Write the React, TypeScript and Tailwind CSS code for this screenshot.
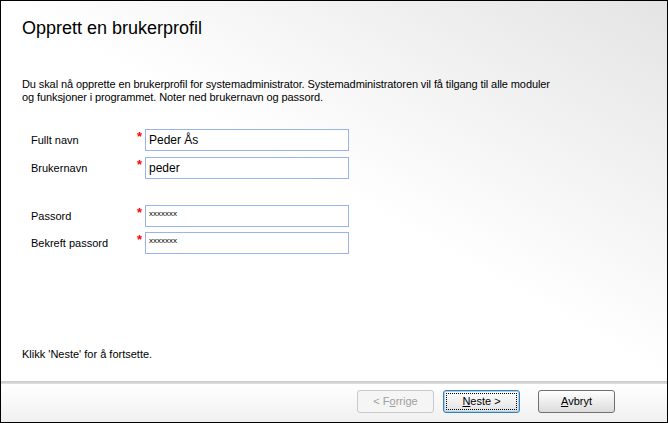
import React from 'react'

const font = { fontFamily: '"Liberation Sans", Arial, sans-serif' }

function Field({ label, value, secret }: { label: string; value: string; secret?: boolean }) {
  return (
    <div className="flex items-start h-[22px]">
      <div className="w-[106px] pt-[5px] text-[11px] leading-[13px] text-black">{label}</div>
      <div className="w-[8px] h-[22px] text-[#ff0000] text-[13px] leading-[13px] font-bold pt-[1px]">*</div>
      <div className="w-[204px] h-[22px] border border-[#98b3ef] bg-white flex items-center px-[3px]">
        {secret ? (
          <span className="text-[8px] leading-[8px] text-black -mt-[4px]">{value}</span>
        ) : (
          <span className="text-[12px] leading-[14px] text-black">{value}</span>
        )}
      </div>
    </div>
  )
}

function XpButton({ children, disabled, focused }: { children: React.ReactNode; disabled?: boolean; focused?: boolean }) {
  return (
    <div
      className={
        'w-[77px] h-[23px] rounded-[3px] border flex items-center justify-center text-[11px] leading-[13px] ' +
        (disabled
          ? 'border-[#c9c9c9] bg-[#f5f5f5] text-[#a0a0a0]'
          : focused
          ? 'border-[#3c7fb1] bg-gradient-to-b from-white to-[#e2e2e2] text-black shadow-[inset_0_0_0_1px_#9fd3f4]'
          : 'border-[#707070] bg-gradient-to-b from-white to-[#dcdcdc] text-black')
      }
    >
      {focused ? (
        <div className="w-[71px] h-[17px] border border-dotted border-black flex items-center justify-center">{children}</div>
      ) : (
        children
      )}
    </div>
  )
}

export default function App() {
  return (
    <div style={font} className="w-[668px] h-[423px] border border-black flex flex-col bg-white overflow-hidden">
      <div className="flex-1 bg-gradient-to-bl from-[#e4e4e4] via-white to-white pl-[21px] pt-[16px]">
        <h1 className="text-[18px] leading-[22px] text-black font-normal">Opprett en brukerprofil</h1>
        <p className="mt-[39px] text-[11px] leading-[13px] tracking-[-0.1px] text-black w-[540px]">
          Du skal nå opprette en brukerprofil for systemadministrator. Systemadministratoren vil få tilgang til alle moduler og funksjoner i programmet. Noter ned brukernavn og passord.
        </p>
        <div className="ml-[9px] mt-[25px] flex flex-col">
          <Field label="Fullt navn" value="Peder Ås" />
          <div className="h-[6px]" />
          <Field label="Brukernavn" value="peder" />
          <div className="h-[26px]" />
          <Field label="Passord" value="xxxxxxx" secret />
          <div className="h-[5px]" />
          <Field label="Bekreft passord" value="xxxxxxx" secret />
        </div>
        <p className="mt-[94px] text-[11px] leading-[13px] text-black">Klikk 'Neste' for å fortsette.</p>
      </div>
      <div className="h-[3px] bg-gradient-to-b from-[#c8c8c8] to-[#e0e0e0]" />
      <div className="h-[38px] bg-gradient-to-b from-white to-[#f0f0f0] flex items-start justify-end pt-[6px] pr-[52px] gap-[9px]">
        <XpButton disabled>
          &lt; F<span className="underline">o</span>rrige
        </XpButton>
        <XpButton focused>
          <span className="underline">N</span>este &gt;
        </XpButton>
        <div className="ml-[9px]">
          <XpButton>
            <span className="underline">A</span>vbryt
          </XpButton>
        </div>
      </div>
    </div>
  )
}
